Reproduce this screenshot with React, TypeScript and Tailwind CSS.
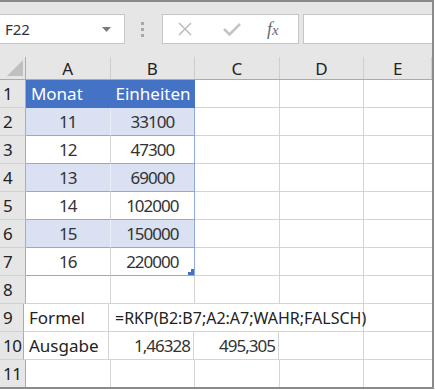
const COLS = [
  { key: "A", w: "w-[85px]" },
  { key: "B", w: "w-[85px]" },
  { key: "C", w: "w-[85px]" },
  { key: "D", w: "w-[85px]" },
  { key: "E", w: "w-[68px]" },
];

type Row = {
  n: number;
  a?: string;
  b?: string;
  kind: "head" | "band" | "plain" | "none";
};

const ROWS: Row[] = [
  { n: 1, a: "Monat", b: "Einheiten", kind: "head" },
  { n: 2, a: "11", b: "33100", kind: "band" },
  { n: 3, a: "12", b: "47300", kind: "plain" },
  { n: 4, a: "13", b: "69000", kind: "band" },
  { n: 5, a: "14", b: "102000", kind: "plain" },
  { n: 6, a: "15", b: "150000", kind: "band" },
  { n: 7, a: "16", b: "220000", kind: "plain" },
  { n: 8, kind: "none" },
  { n: 9, kind: "none" },
  { n: 10, kind: "none" },
  { n: 11, kind: "none" },
];

export default function App() {
  return (
    <div className="w-[435px] h-[390px] bg-white overflow-hidden font-['Noto_Sans',sans-serif]">
      <div className="w-[434px] h-[389px] border-t-2 border-r-2 border-b-2 border-[#8a8a8a] overflow-hidden bg-white">
        <Toolbar />
        <HeaderRow />
        {ROWS.map((r) => (
          <DataRow key={r.n} row={r} />
        ))}
      </div>
    </div>
  );
}

function Toolbar() {
  return (
    <div className="h-[55px] bg-[#e6e6e6] pt-[12px] flex items-start">
      <div className="w-[125px] h-[30px] bg-white border-t border-r border-b border-[#c6c6c6] flex items-center justify-between pl-[5px] pr-[13px]">
        <span className="text-[15px] text-[#333] leading-none">F22</span>
        <svg width="9" height="5" viewBox="0 0 9 5">
          <path d="M0 0 L9 0 L4.5 5 Z" fill="#7a7a7a" />
        </svg>
      </div>
      <div className="w-[37px] h-[30px] flex flex-col items-center justify-center gap-[3px] pr-[3px]">
        <div className="w-[3px] h-[3px] bg-[#a8a8a8]" />
        <div className="w-[3px] h-[3px] bg-[#a8a8a8]" />
        <div className="w-[3px] h-[3px] bg-[#a8a8a8]" />
      </div>
      <div className="w-[137px] h-[30px] bg-white border border-[#c6c6c6] flex items-center pl-[14px]">
        <svg width="16" height="16" viewBox="0 0 16 16" className="mr-[30px]">
          <path d="M2 2 L14 14 M14 2 L2 14" stroke="#bdbdbd" strokeWidth="1.6" fill="none" />
        </svg>
        <svg width="18" height="16" viewBox="0 0 18 16" className="mr-[26px]">
          <path d="M1 8 L6.5 13.5 L17 3" stroke="#c4c4c4" strokeWidth="2.6" fill="none" />
        </svg>
        <span className="font-['Liberation_Serif',serif] italic text-[18px] text-[#6a6a6a] leading-none">
          f<span className="text-[15px]">x</span>
        </span>
      </div>
      <div className="flex-1 ml-[4px] h-[30px] bg-white border-t border-l border-b border-[#c6c6c6]" />
    </div>
  );
}

function HeaderRow() {
  return (
    <div className="flex h-[23px] bg-[#e6e6e6] border-b border-[#ababab]">
      <div className="w-[26px] h-full border-r border-[#ababab] relative">
        <svg width="16" height="16" viewBox="0 0 16 16" className="absolute left-[7px] top-[3px]">
          <path d="M16 0 L16 16 L0 16 Z" fill="#c0c0c0" />
        </svg>
      </div>
      {COLS.map((c) => (
        <div
          key={c.key}
          className={`${c.w} h-full border-r border-[#cfcfcf] flex items-center justify-center text-[17px] text-[#222] leading-none`}
        >
          {c.key}
        </div>
      ))}
    </div>
  );
}

function DataRow({ row }: { row: Row }) {
  const grid = "border-[#d4d4d4]";
  let aCls = `border-r border-b ${grid}`;
  let bCls = `border-r border-b ${grid}`;
  let text = "text-[#333] tracking-[-1px]";
  if (row.kind === "head") {
    aCls = "bg-[#4472c4] border-r border-b border-[#4472c4]";
    bCls = "bg-[#4472c4] border-r border-b border-[#4472c4]";
    text = "text-white";
  } else if (row.kind === "band") {
    aCls = "bg-[#d9e1f2] border-r border-b border-r-[#e9eef8] border-b-[#8ea9db]";
    bCls = "bg-[#d9e1f2] border-r border-b border-r-[#8ea9db] border-b-[#8ea9db]";
  } else if (row.kind === "plain") {
    aCls = "bg-white border-r border-b border-r-[#d4d4d4] border-b-[#8ea9db]";
    bCls = "bg-white border-r border-b border-r-[#8ea9db] border-b-[#8ea9db]";
  }
  const align = row.kind === "head" ? "justify-start pl-[5px]" : "justify-center";

  return (
    <div className="flex h-[28px]">
      <div className="w-[26px] h-full bg-[#e6e6e6] border-r border-b border-r-[#ababab] border-b-[#d0d0d0] flex items-center pl-[3px] text-[17px] text-[#222] leading-none tracking-[-0.5px]">
        {row.n}
      </div>
      {row.n === 9 ? (
        <FormulaRow />
      ) : row.n === 10 ? (
        <OutputRow />
      ) : (
        <>
          <div className={`w-[85px] h-full flex items-center ${align} ${aCls} text-[17px] ${text} leading-none`}>
            {row.a}
          </div>
          <div className={`w-[85px] h-full flex items-center ${align} ${bCls} text-[17px] ${text} leading-none relative`}>
            {row.b}
            {row.n === 7 && (
              <svg width="6" height="6" viewBox="0 0 6 6" className="absolute right-[0px] bottom-[0px]">
                <path d="M3 0 L6 0 L6 6 L0 6 L0 3 L3 3 Z" fill="#4472c4" />
              </svg>
            )}
          </div>
          <div className={`w-[85px] h-full border-r border-b ${grid}`} />
          <div className={`w-[85px] h-full border-r border-b ${grid}`} />
          <div className={`w-[68px] h-full border-b ${grid}`} />
        </>
      )}
    </div>
  );
}

function FormulaRow() {
  return (
    <div className="flex h-full">
      <div className="w-[85px] h-full flex items-center pl-[5px] border-r border-b border-[#d4d4d4] text-[17px] text-[#222] leading-none">
        Formel
      </div>
      <div className="w-[85px] h-full border-b border-[#d4d4d4] relative">
        <span className="absolute left-[6px] top-0 h-full flex items-center whitespace-nowrap text-[16px] text-[#222] leading-none">
          =RKP(B2:B7;A2:A7;WAHR;FALSCH)
        </span>
      </div>
      <div className="w-[85px] h-full border-b border-[#d4d4d4]" />
      <div className="w-[85px] h-full border-r border-b border-[#d4d4d4]" />
      <div className="w-[68px] h-full border-b border-[#d4d4d4]" />
    </div>
  );
}

function OutputRow() {
  return (
    <div className="flex h-full">
      <div className="w-[85px] h-full flex items-center pl-[5px] border-r border-b border-[#d4d4d4] text-[17px] text-[#222] leading-none">
        Ausgabe
      </div>
      <div className="w-[85px] h-full flex items-center justify-end pr-[3px] border-r border-b border-[#d4d4d4] text-[17px] text-[#333] leading-none tracking-[-1px]">
        1,46328
      </div>
      <div className="w-[85px] h-full flex items-center justify-end pr-[3px] border-r border-b border-[#d4d4d4] text-[17px] text-[#333] leading-none tracking-[-1px]">
        495,305
      </div>
      <div className="w-[85px] h-full border-r border-b border-[#d4d4d4]" />
      <div className="w-[68px] h-full border-b border-[#d4d4d4]" />
    </div>
  );
}
